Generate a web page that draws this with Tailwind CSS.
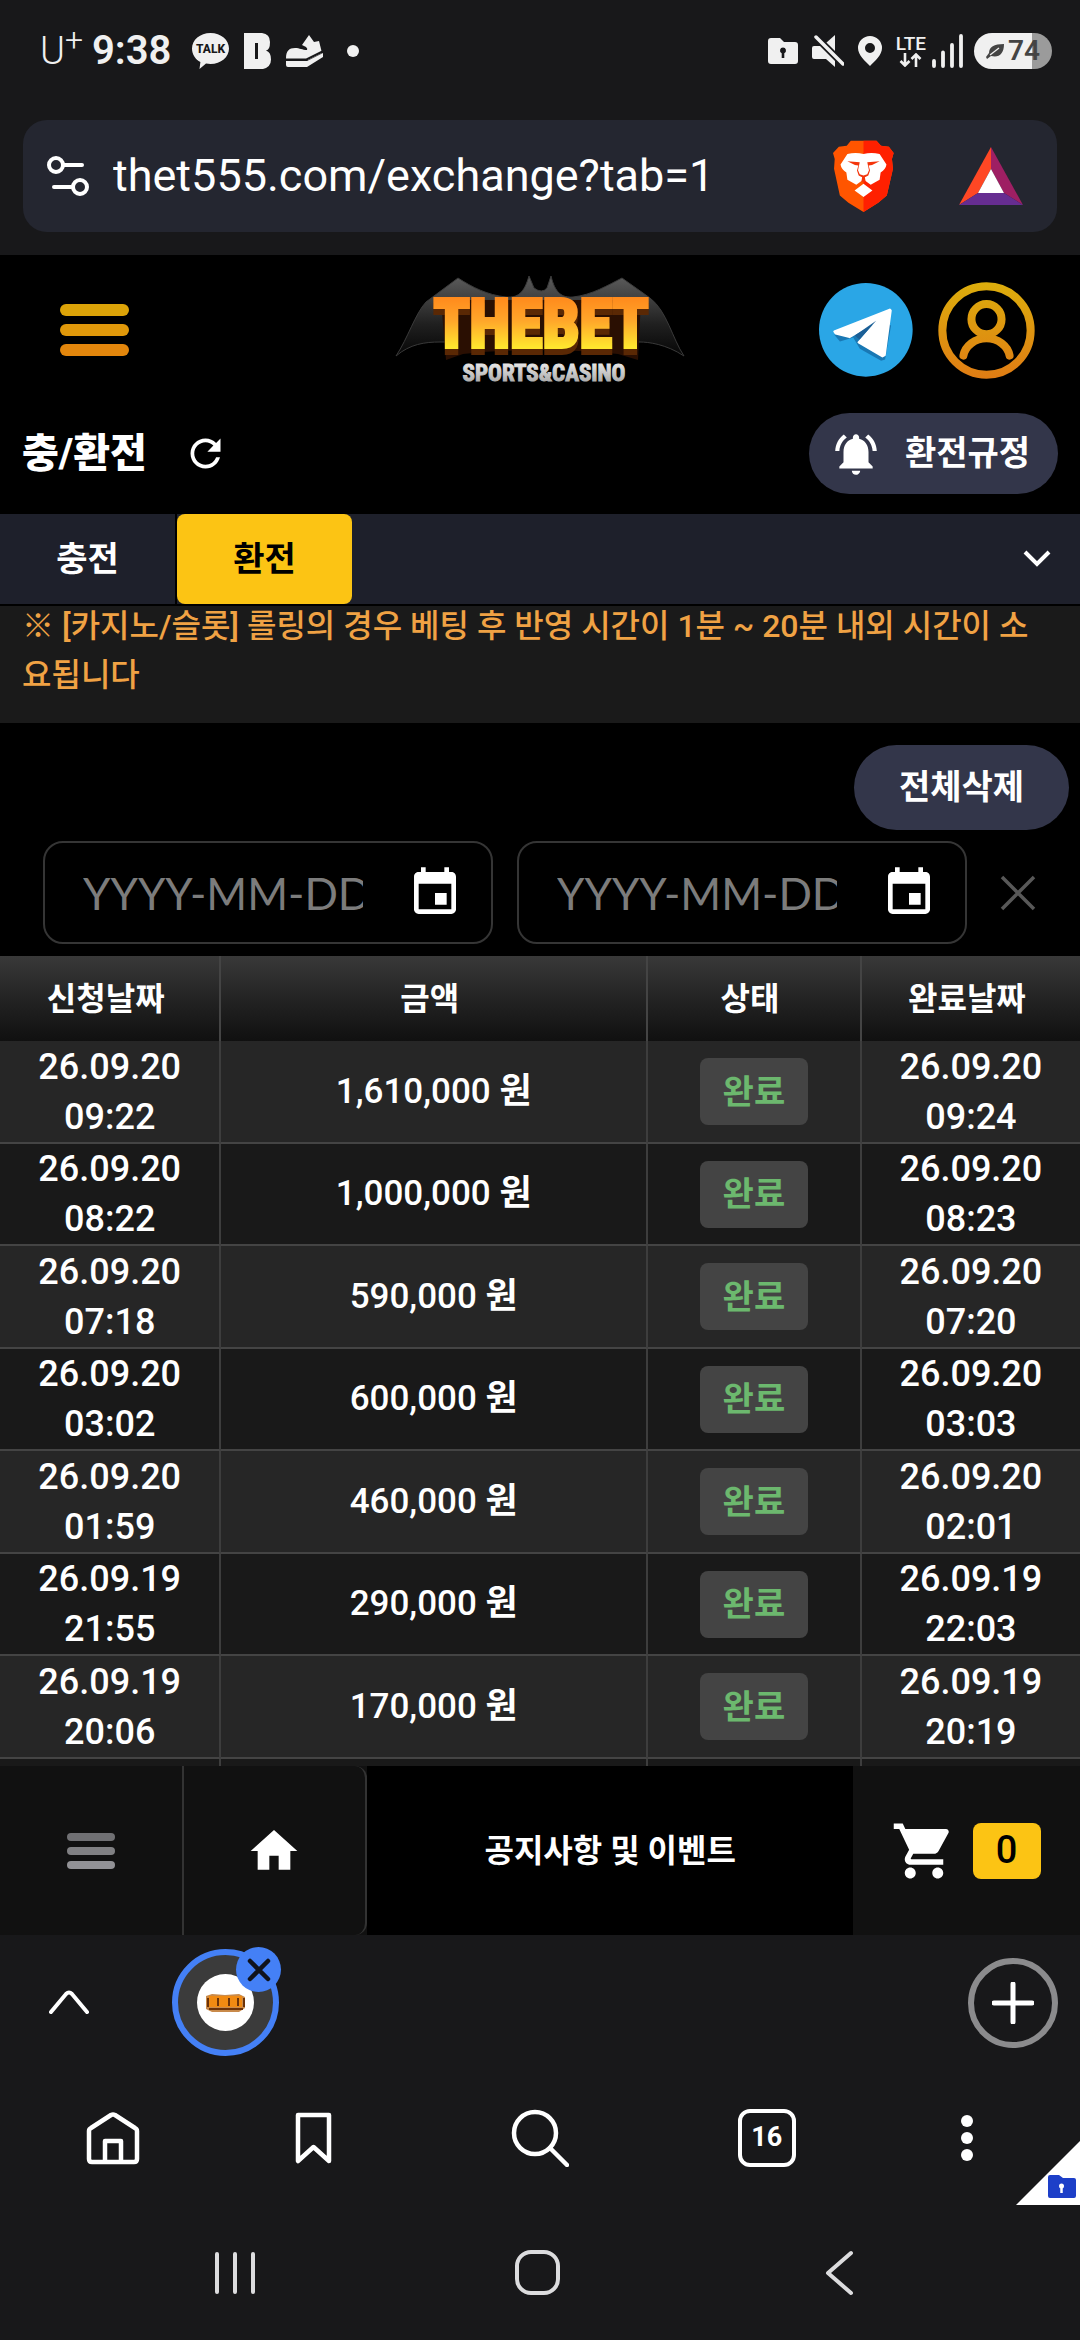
<!DOCTYPE html>
<html lang="ko">
<head>
<meta charset="utf-8">
<meta name="viewport" content="width=device-width, initial-scale=1">
<title>충/환전</title>
<script src="https://cdn.jsdelivr.net/npm/@tailwindcss/browser@4"></script>
</head>
<body class="min-h-screen flex flex-col bg-[#18181a] text-white font-['Roboto','Noto_Sans_CJK_KR',sans-serif]">

<!-- Device status bar -->
<div class="h-[102px] pr-7 pl-10 flex items-center justify-between text-[#f0f0f0]">
  <div class="flex items-center">
    <span class="flex w-[52px] text-[38px] leading-none font-light">U<span class="-mt-2 text-[32px]">+</span></span>
    <span class="w-[100px] text-[40px] leading-none font-semibold">9:38</span>
    <svg class="w-[37px] h-[36px]" viewBox="0 0 37 36"><path fill="#f0f0f0" d="M18.500 0C29 0 37 7 37 15.500S29 31 18.500 31c-1.500 0-3 0-4.500-.4L7.500 36l.9-7C3.500 26.500 0 21.500 0 15.500 0 7 8 0 18.500 0z"/><text x="18.500" y="20" text-anchor="middle" font-size="12" font-weight="800" fill="#18181a">TALK</text></svg>
    <svg class="ml-[15px] w-[27px] h-[36px]" viewBox="0 0 27 36"><path fill="#f0f0f0" fill-rule="evenodd" d="M0 0h18q8 1 8 9t-4 8.500q5 1.500 5 9T19 36H0zM11 10v16h3V10z"/></svg>
    <svg class="ml-[15px] w-[37px] h-[32px]" viewBox="0 0 37 32"><path fill="#f0f0f0" d="M0 23C0 16 3 13 9 13c5 0 7 2 12 2q1-1-1-3l-4-2 7-10 5 7 5-1 3 12-14 7H0z"/><path fill="#f0f0f0" d="M0 26h21l16-8v4l-16 10H2q-2 0-2-2z"/><path d="M0 24.500h20.500l16-8" fill="none" stroke="#18181a" stroke-width="2"/></svg>
    <span class="ml-6 size-3 rounded-full bg-[#f0f0f0]"></span>
  </div>
  <div class="flex items-center">
    <svg class="w-[30px] h-[26px]" viewBox="0 0 30 26"><path fill="#f0f0f0" fill-rule="evenodd" d="M3 0h9l4 4h11q3 0 3 3v16q0 3-3 3H3q-3 0-3-3V3q0-3 3-3zM15 9.500a3 3 0 0 0-1.300 5.700V20h2.600v-4.800A3 3 0 0 0 15 9.500z"/></svg>
    <svg class="ml-[14px] w-[32px] h-[32px]" viewBox="0 0 32 32"><path fill="#f0f0f0" d="M23 0v17L14 8zM2 11h7l14 14v7l-9-8H2q-2 0-2-2v-9q0-2 2-2z"/><path d="M4 2l27 27" stroke="#18181a" stroke-width="7"/><path d="M4 2l27 27" stroke="#f0f0f0" stroke-width="3.500" stroke-linecap="round"/></svg>
    <svg class="ml-[14px] w-6 h-[30px]" viewBox="0 0 24 30"><path fill="#f0f0f0" fill-rule="evenodd" d="M12 0a12 12 0 0 1 12 12c0 7-7 13-12 18C7 25 0 19 0 12A12 12 0 0 1 12 0zm0 7a5 5 0 1 0 0 10 5 5 0 0 0 0-10z"/></svg>
    <span class="ml-[14px] flex flex-col items-center text-[19px] leading-[18px] font-medium">LTE
      <svg class="w-6 h-[14px]" viewBox="0 0 24 14"><path d="M6 0v12M1.500 8L6 12.500 10.500 8M17 14V2M12.500 6L17 1.500 21.500 6" fill="none" stroke="#f0f0f0" stroke-width="2.600"/></svg></span>
    <svg class="ml-[6px] w-[31px] h-[34px]" viewBox="0 0 31 34"><path d="M2 32v-5M11 32V18.500M20 32V11M29 32V2" stroke="#f0f0f0" stroke-width="3.800" stroke-linecap="round"/></svg>
    <span class="ml-[11px] w-[78px] h-9 rounded-full bg-linear-to-r from-[#f0f0f0] from-74% to-[#9b9b9b] to-74% flex items-center justify-center gap-1 text-[#444] text-[28px] leading-none font-semibold">
      <svg class="w-[18px] h-[15px]" viewBox="0 0 18 15"><path fill="#444" d="M18 0C8 0 3 3 3 9l-3 4 1 2 4-3c8 2 13-2 13-12z"/><path d="M4 11l9-7" stroke="#f0f0f0" stroke-width="1.300"/></svg>74</span>
  </div>
</div>

<!-- Address bar -->
<div class="px-[23px] pt-[18px] pb-[23px]">
  <div class="h-[112px] rounded-3xl bg-[#242630] pl-6 pr-[34px] flex items-center">
    <button aria-label="사이트 설정" class="w-[42px]"><svg class="w-[42px] h-[40px]" viewBox="0 0 42 40" fill="none" stroke="#fff" stroke-width="4" stroke-linecap="round"><circle cx="9" cy="9" r="7"/><path d="M17 9h18M7 31h17"/><circle cx="33" cy="31" r="7"/></svg></button>
    <input aria-label="주소" value="thet555.com/exchange?tab=1" class="ml-6 min-w-0 flex-1 bg-transparent text-[45px] outline-none">
    <button aria-label="Brave Shields"><svg class="w-[61px] h-[72px]" preserveAspectRatio="none" viewBox="0 0 178 217"><path fill="#ff5500" d="M52 2h75l13 15 23 3 14 19-5 18 3 30-18 80-25 22-43 28-44-28-25-22L3 87l2-30-5-18 17-19 23-3z"/><path fill="#ff2000" d="M89 2h38l13 15 23 3 14 19-5 18 3 30-18 80-25 22-43 28z"/><path fill="#fff" d="M42 42q24-6 47 0 23-6 47 0l20 32q-2 14-17 24l-3 22-26 15-21-16-21 16-26-15-3-22Q24 88 22 74zM89 132l26 20-26 20-26-20z"/><path fill="#f4340a" d="M42 64l36 3-5 24 5 12 11 4 11-4 5-12-5-24 36-3-22 11-10 2 4 15-5 15-10 5 2 12-6 4-6-4 2-12-10-5-5-15 4-15-10-2z"/></svg></button>
    <button aria-label="Brave Rewards" class="ml-[65px]"><svg class="w-[64px] h-[58px]" viewBox="0 0 64 58"><path fill="#ff4724" d="M32 0v22L19 46 0 58z"/><path fill="#9e1f63" d="M32 0l32 58-19-12-13-24z"/><path fill="#662d91" d="M0 58l19-12h26l19 12z"/><path fill="#fff" d="M32 22l13 24H19z"/></svg></button>
  </div>
</div>

<main class="bg-black">
  <!-- Site header -->
  <header class="h-[150px] pl-[60px] pr-[45px] grid grid-cols-[1fr_auto_1fr] items-center">
    <button aria-label="메뉴" class="w-[69px] flex flex-col gap-2"><span class="h-3 rounded-full bg-[#dca308]"></span><span class="h-3 rounded-full bg-[#e0980a]"></span><span class="h-3 rounded-full bg-[#e2860c]"></span></button>
    <a href="#" aria-label="THEBET" class="ml-[-15px]">
      <svg class="w-[290px] h-[116px]" viewBox="0 -4 290 116">
        <defs>
          <linearGradient id="gold" x1="0" y1="0" x2="0" y2="1"><stop offset=".15" stop-color="#ff8a1c"/><stop offset=".45" stop-color="#ffa62a"/><stop offset=".8" stop-color="#ffe72e"/></linearGradient>
          <linearGradient id="bat" x1="0" y1="0" x2="0" y2="1"><stop offset="0" stop-color="#5c5c5c"/><stop offset=".6" stop-color="#202020"/><stop offset="1" stop-color="#060606"/></linearGradient>
          <linearGradient id="silver" x1="0" y1="0" x2="0" y2="1"><stop offset="0" stop-color="#f2f2f2"/><stop offset="1" stop-color="#9c9c9c"/></linearGradient>
        </defs>
        <path fill="url(#bat)" stroke="#3a3a3a" d="M1 80C13 62 20 38 31 26L63 2c14 9 29 17 48 19 12 1 18-4 23-21l5 12q8 6 13 0l4-12c4 17 11 22 22 21 19-2 35-12 49-19l28 20c17 13 22 40 34 58-18-12-36-14-44-14H45C30 66 15 68 1 80z"/>
        <path fill="#2a0f02" d="M46 24h200l-3 60-20-6q-78-8-155 0l-17 6z"/>
        <text x="146" y="71" text-anchor="middle" class="drop-shadow-[0_6px_0_#5a2804]" font-family="'Liberation Sans Narrow','Roboto Condensed',sans-serif" font-size="66" font-weight="700" fill="url(#gold)" stroke="url(#gold)" stroke-width="4">THEBET</text>
        <text x="149" y="105" text-anchor="middle" font-family="'Liberation Sans Narrow','Roboto Condensed',sans-serif" font-size="23" font-weight="700" fill="url(#silver)" stroke="url(#silver)">SPORTS&amp;CASINO</text>
      </svg>
    </a>
    <div class="flex justify-end items-center gap-[25px]">
      <a href="#" aria-label="텔레그램"><svg class="size-[94px]" viewBox="0 0 283 283"><circle cx="141" cy="141" r="141" fill="#2aa6e6"/><path fill="#1978b4" d="M46 156l126-48 45 20-18 102-12 4-64-36-20-34-40 12z"/><path fill="#fff" stroke="#fff" stroke-width="6" stroke-linejoin="round" d="M46 146L213 80l3 3-18 134-7 4-72-42 57-66-84 50-42-11z"/><path fill="#1b5f96" d="M108 158l64-44-50 56z"/></svg></a>
      <a href="#" aria-label="내 정보"><svg class="size-[97px]" viewBox="0 0 290 290" fill="none" stroke="url(#ring)" stroke-width="24" stroke-linecap="round"><defs><linearGradient id="ring" gradientUnits="userSpaceOnUse" x1="0" y1="0" x2="0" y2="290"><stop stop-color="#dcae0c"/><stop offset="1" stop-color="#e07c14"/></linearGradient></defs><circle cx="145" cy="145" r="132"/><circle cx="145" cy="111" r="45"/><path d="M76 220a70 62 0 0 1 138 0"/></svg></a>
    </div>
  </header>

  <!-- Page title -->
  <div class="pt-2 pb-5 px-[22px] flex items-center justify-between">
    <div class="flex items-center">
      <h1 class="text-[40px] leading-none font-extrabold">충/환전</h1>
      <button aria-label="새로고침" class="ml-9"><svg class="size-[45px]" viewBox="0 0 24 24" fill="#fff"><path d="M17.650 6.350C16.200 4.900 14.210 4 12 4c-4.420 0-7.990 3.580-7.990 8s3.570 8 7.990 8c3.730 0 6.840-2.550 7.730-6h-2.080c-.82 2.330-3.040 4-5.650 4-3.310 0-6-2.690-6-6s2.690-6 6-6c1.660 0 3.140.69 4.220 1.780L13 11h7V4l-2.350 2.350z"/></svg></button>
    </div>
    <button class="h-[81px] pl-[22px] pr-7 rounded-full bg-[#33364a] flex items-center gap-6 text-[34px] font-bold">
      <svg class="size-[50px]" viewBox="0 0 24 24" fill="#fff"><path d="M7.580 4.080L6.150 2.650C3.750 4.480 2.170 7.300 2.030 10.500h2c.15-2.650 1.510-4.970 3.550-6.420zm12.390 6.420h2c-.15-3.200-1.730-6.020-4.120-7.850l-1.420 1.430c2.020 1.450 3.390 3.770 3.540 6.420zM18 11c0-3.070-1.640-5.640-4.500-6.320V4c0-.83-.67-1.500-1.500-1.500s-1.500.67-1.500 1.500v.68C7.630 5.360 6 7.920 6 11v5l-2 2v1h16v-1l-2-2v-5zm-6 11c.14 0 .27-.01.4-.04.65-.14 1.180-.58 1.440-1.180.1-.24.15-.5.15-.78h-4c.01 1.100.9 2 2.010 2z"/></svg>환전규정</button>
  </div>

  <!-- Tabs -->
  <nav class="h-[90px] bg-[#1e202b] flex items-stretch text-[34px] font-bold">
    <button class="w-[177px] border-r-2 border-black">충전</button>
    <button class="w-[175px] rounded-lg bg-[#fcc414] text-black">환전</button>
    <button aria-label="펼치기" class="ml-auto mr-7"><svg class="w-[30px] h-5" viewBox="0 0 30 20"><path d="M3 3l12 12L27 3" fill="none" stroke="#fff" stroke-width="4"/></svg></button>
  </nav>
  <div class="h-[119px] border-t-2 border-black bg-[#1a1a1a] px-[22px] text-[#f0a244] text-[32px] leading-[49px] font-medium">
    <p class="-mt-1 break-all">※ [카지노/슬롯] 롤링의 경우 베팅 후 반영 시간이 1분 ~ 20분 내외 시간이 소<br>요됩니다</p>
  </div>

  <!-- Filters -->
  <div class="pt-[22px] px-[11px] pb-[11px] flex justify-end">
    <button class="h-[85px] px-[45px] rounded-full bg-[#33364a] text-[34px] font-bold">전체삭제</button>
  </div>
  <form class="pl-[43px] pr-[43px] pb-3 flex items-center">
    <label class="flex-1 min-w-0 h-[103px] pl-[38px] pr-7 border-2 border-[#353535] rounded-[20px] flex items-center gap-11">
      <input aria-label="시작 날짜" placeholder="YYYY-MM-DD" class="min-w-0 flex-1 bg-transparent text-[44px] placeholder:text-[#7c7c7c] font-['Lato',sans-serif] outline-none">
      <svg class="size-[56px] shrink-0" viewBox="0 0 24 24" fill="#fff"><path d="M17 12h-5v5h5v-5zM16 1v2H8V1H6v2H5c-1.110 0-1.990.9-1.990 2L3 19c0 1.100.89 2 2 2h14c1.100 0 2-.9 2-2V5c0-1.100-.9-2-2-2h-1V1h-2zm3 18H5V8h14v11z"/></svg>
    </label>
    <label class="ml-6 flex-1 min-w-0 h-[103px] pl-[38px] pr-7 border-2 border-[#353535] rounded-[20px] flex items-center gap-11">
      <input aria-label="종료 날짜" placeholder="YYYY-MM-DD" class="min-w-0 flex-1 bg-transparent text-[44px] placeholder:text-[#7c7c7c] font-['Lato',sans-serif] outline-none">
      <svg class="size-[56px] shrink-0" viewBox="0 0 24 24" fill="#fff"><path d="M17 12h-5v5h5v-5zM16 1v2H8V1H6v2H5c-1.110 0-1.990.9-1.990 2L3 19c0 1.100.89 2 2 2h14c1.100 0 2-.9 2-2V5c0-1.100-.9-2-2-2h-1V1h-2zm3 18H5V8h14v11z"/></svg>
    </label>
    <button type="reset" aria-label="날짜 지우기" class="ml-8"><svg class="size-[38px]" viewBox="0 0 38 38"><path d="M3 3l32 32M35 3L3 35" stroke="#585858" stroke-width="3.500"/></svg></button>
  </form>

  <!-- History -->
  <div class="h-[810px] overflow-hidden bg-[#191919]">
  <table class="w-full table-fixed border-separate border-spacing-0 text-center [&_td]:p-0 [&_td]:border-b-2 [&_td]:border-b-[#444] [&_td:not(:last-child)]:border-r-2 [&_td]:border-r-[#3d3d3d] [&_th:not(:last-child)]:border-r-2 [&_th]:border-r-[#444] [&_th]:pr-2 [&_tbody_tr]:bg-[#191919] [&_tbody_tr:nth-child(odd)]:bg-[#262626]">
    <colgroup><col class="w-[20.5%]"><col class="w-[39.5%]"><col class="w-[19.8%]"><col></colgroup>
    <thead class="bg-linear-to-b from-[#393939] to-[#101010] text-[32px]">
      <tr class="h-[85px]"><th scope="col">신청날짜</th><th scope="col">금액</th><th scope="col">상태</th><th scope="col">완료날짜</th></tr>
    </thead>
    <tbody id="history" class="text-[36px] leading-[50px] font-medium"></tbody>
  </table>
  </div>

  <!-- Site bottom bar -->
  <nav class="h-[169px] bg-[#111] grid grid-cols-[17fr_17fr_45fr_21fr]">
    <button aria-label="전체 메뉴" class="border-r-2 border-[#333] flex items-center justify-center"><span class="w-12 flex flex-col gap-[6px]"><span class="h-2 rounded-full bg-[#707073]"></span><span class="h-2 rounded-full bg-[#808083]"></span><span class="h-2 rounded-full bg-[#929296]"></span></span></button>
    <a href="#" aria-label="홈" class="border-r-2 border-[#333] rounded-r-xl flex items-center justify-center"><svg class="size-[56px]" viewBox="0 0 24 24" fill="#fff"><path d="M10 20v-6h4v6h5v-8h3L12 3 2 12h3v8z"/></svg></a>
    <a href="#" class="bg-black flex items-center justify-center text-[32px] font-bold">공지사항 및 이벤트</a>
    <button class="flex items-center justify-center gap-[18px]">
      <svg class="w-[62px] h-[66px]" viewBox="1 0 22 24" fill="#fff"><path d="M7 18c-1.100 0-1.990.9-1.990 2S5.900 22 7 22s2-.9 2-2-.9-2-2-2zM1 2v2h2l3.600 7.590-1.350 2.450c-.16.28-.25.61-.25.96 0 1.100.9 2 2 2h12v-2H7.420c-.14 0-.25-.11-.25-.25l.03-.12.9-1.630h7.450c.75 0 1.410-.41 1.750-1.030l3.580-6.490c.08-.14.12-.31.12-.48 0-.55-.45-1-1-1H5.210l-.94-2H1zm16 16c-1.100 0-1.990.9-1.990 2s.89 2 1.990 2 2-.9 2-2-.9-2-2-2z"/></svg>
      <span class="w-[68px] h-[56px] rounded-lg bg-[#fcc414] text-black text-[38px] font-medium flex items-center justify-center">0</span>
    </button>
  </nav>
</main>

<!-- Browser tab strip -->
<div class="h-[135px] pl-[49px] pr-[22px] flex items-center">
  <button aria-label="탭 목록"><svg class="w-10 h-7" viewBox="0 0 40 28"><path d="M2 23L17 5q3-3 6 0l15 18" fill="none" stroke="#fff" stroke-width="4" stroke-linecap="round"/></svg></button>
  <div class="relative ml-[83px] size-[107px] rounded-full border-6 border-[#4480f6] bg-[#3b3b3b] flex items-center justify-center">
    <svg class="size-[57px]" viewBox="0 0 57 57"><circle cx="28.500" cy="28.500" r="28.500" fill="#fff"/><path fill="#c98a4a" d="M9 22l6-2 13 1 14-1 6 3v11l-6 4H15l-6-3z"/><path fill="#f08a12" d="M12 22h33v11H12z"/><path stroke="#6b3208" stroke-width="2" d="M12 35h34M11 24v9M21 24v8M32 24v8M41 24v8M47 24v9"/></svg>
    <button aria-label="탭 닫기" class="absolute -top-2 -right-2 size-[45px] rounded-full bg-[#4480f6] flex items-center justify-center"><svg class="size-6" viewBox="0 0 24 24"><path d="M3 3l18 18M21 3L3 21" stroke="#10131c" stroke-width="4.500" stroke-linecap="round"/></svg></button>
  </div>
  <button aria-label="새 탭" class="ml-auto size-[90px] rounded-full border-6 border-[#8b8b8d] flex items-center justify-center"><svg class="size-[42px]" viewBox="0 0 42 42"><path d="M21 2v38M2 21h38" stroke="#fff" stroke-width="5" stroke-linecap="round"/></svg></button>
</div>

<!-- Browser toolbar -->
<div class="relative h-[135px] grid grid-cols-[21fr_16fr_26fr_16fr_21fr] items-center">
  <button aria-label="홈페이지" class="flex justify-center"><svg class="size-[54px]" viewBox="0 0 54 54" fill="none" stroke="#fff" stroke-width="4.500" stroke-linejoin="round"><path d="M3 20q0-2 2-3L25 4q2-1 4 0l20 13q2 1 2 3v28q0 3-3 3H6q-3 0-3-3zM19 51V30h16v21"/></svg></button>
  <button aria-label="북마크" class="flex justify-center"><svg class="w-[37px] h-[52px]" viewBox="0 0 37 52"><path d="M3 3h31v46L18.500 35 3 49z" fill="none" stroke="#fff" stroke-width="4.500" stroke-linejoin="round"/></svg></button>
  <button aria-label="검색" class="flex justify-center"><svg class="size-[58px]" viewBox="0 0 58 58" fill="none" stroke="#fff" stroke-width="4.500" stroke-linecap="round"><circle cx="24" cy="24" r="21"/><path d="M39 39l17 17"/></svg></button>
  <button aria-label="탭 16개" class="mx-auto size-[58px] rounded-xl border-4 border-white text-[27px] leading-none font-bold">16</button>
  <button aria-label="더보기" class="flex flex-col items-center gap-[5px]"><span class="size-3 rounded-full bg-white"></span><span class="size-3 rounded-full bg-white"></span><span class="size-3 rounded-full bg-white"></span></button>
  <svg class="absolute right-0 bottom-0 size-16" viewBox="0 0 64 64"><path fill="#fff" d="M64 0v64H0z"/><path fill="#1d3fc8" d="M34 34h9l4 3h11q2 0 2 2v16q0 2-2 2H34q-2 0-2-2V36q0-2 2-2z"/><circle cx="45.500" cy="45" r="2.500" fill="#fff"/><path d="M45.500 46v6" stroke="#fff" stroke-width="2.500"/></svg>
</div>

<!-- Device navigation -->
<div class="h-[135px] pl-[84px] pr-[90px] grid grid-cols-3 items-center">
  <button aria-label="최근 앱" class="flex justify-center"><svg class="w-[42px] h-[44px]" viewBox="0 0 42 44"><path d="M3 3v38M21 3v38M39 3v38" stroke="#dcdcde" stroke-width="4" stroke-linecap="round"/></svg></button>
  <button aria-label="홈 화면" class="mx-auto size-[45px] rounded-[16px] border-4 border-[#dcdcde]"></button>
  <button aria-label="뒤로" class="flex justify-center"><svg class="w-7 h-[46px]" viewBox="0 0 28 46"><path d="M26 3L3 23l23 20" fill="none" stroke="#dcdcde" stroke-width="4" stroke-linecap="round" stroke-linejoin="round"/></svg></button>
</div>

<script>
  const rows = [
    ['26.09.20', '09:22', '1,610,000', '26.09.20', '09:24'],
    ['26.09.20', '08:22', '1,000,000', '26.09.20', '08:23'],
    ['26.09.20', '07:18', '590,000', '26.09.20', '07:20'],
    ['26.09.20', '03:02', '600,000', '26.09.20', '03:03'],
    ['26.09.20', '01:59', '460,000', '26.09.20', '02:01'],
    ['26.09.19', '21:55', '290,000', '26.09.19', '22:03'],
    ['26.09.19', '20:06', '170,000', '26.09.19', '20:19'],
  ];
  document.getElementById('history').innerHTML = rows.map(r => `
    <tr class="odd:h-[103px] even:h-[102px]">
      <td>${r[0]}<br>${r[1]}</td>
      <td class="text-[35px]">${r[2]} <span class="font-bold">원</span></td>
      <td><span class="inline-flex h-[67px] w-[108px] items-center justify-center rounded-lg bg-[#444] align-middle text-[34px] font-bold text-[#6cb86e]">완료</span></td>
      <td>${r[3]}<br>${r[4]}</td>
    </tr>`).join('') + '<tr class="h-3" aria-hidden="true"><td></td><td></td><td></td><td></td></tr>';
</script>
</body>
</html>
